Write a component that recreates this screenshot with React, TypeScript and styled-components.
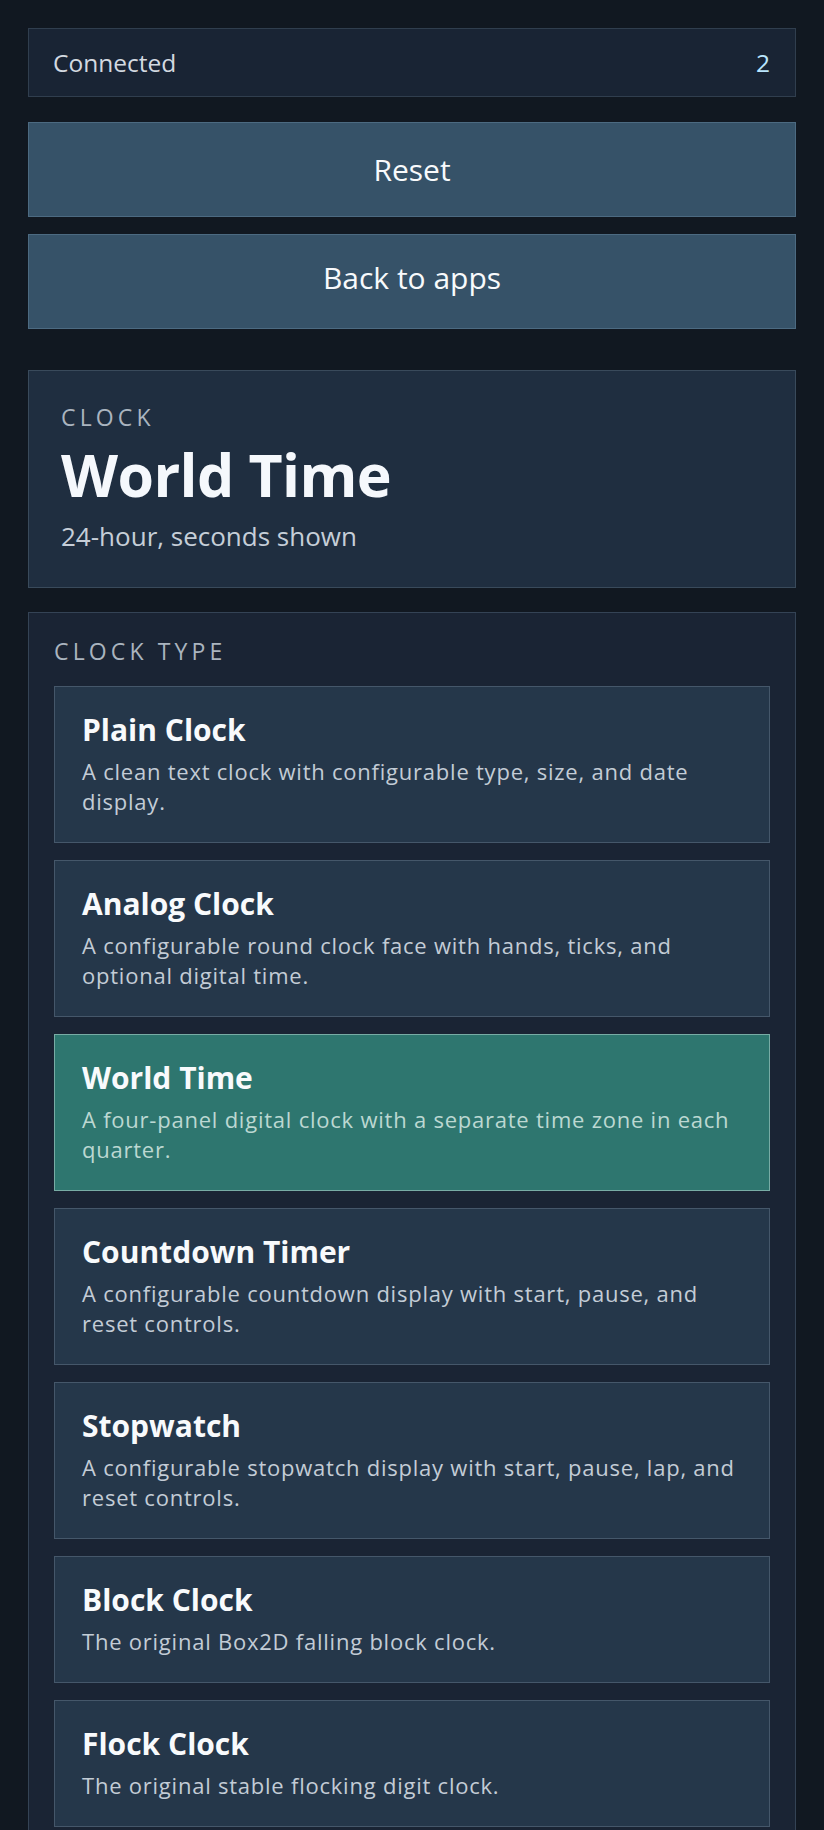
import React from "react";
import styled, { createGlobalStyle } from "styled-components";

const GlobalStyle = createGlobalStyle`
  html, body {
    margin: 0;
    padding: 0;
    background: #111821;
  }

  body {
    font-family: "Open Sans", "Noto Sans", sans-serif;
    color: #f8fafc;
  }

  * {
    box-sizing: border-box;
  }
`;

interface ClockOption {
  id: string;
  title: string;
  description: string;
}

const clockOptions: ClockOption[] = [
  {
    id: "plain",
    title: "Plain Clock",
    description: "A clean text clock with configurable type, size, and date display.",
  },
  {
    id: "analog",
    title: "Analog Clock",
    description: "A configurable round clock face with hands, ticks, and optional digital time.",
  },
  {
    id: "world",
    title: "World Time",
    description: "A four-panel digital clock with a separate time zone in each quarter.",
  },
  {
    id: "countdown",
    title: "Countdown Timer",
    description: "A configurable countdown display with start, pause, and reset controls.",
  },
  {
    id: "stopwatch",
    title: "Stopwatch",
    description: "A configurable stopwatch display with start, pause, lap, and reset controls.",
  },
  {
    id: "block",
    title: "Block Clock",
    description: "The original Box2D falling block clock.",
  },
  {
    id: "flock",
    title: "Flock Clock",
    description: "The original stable flocking digit clock.",
  },
];

const App = () => {
  const selected = "world";

  return (
    <>
      <GlobalStyle />
      <Page>
        <StatusBar>
          <StatusLabel>Connected</StatusLabel>
          <StatusCount>2</StatusCount>
        </StatusBar>

        <ActionStack>
          <ActionButton type="button">Reset</ActionButton>
          <BackLink href="#">Back to apps</BackLink>
        </ActionStack>

        <HeaderCard>
          <Eyebrow>Clock</Eyebrow>
          <Heading>World Time</Heading>
          <Subheading>24-hour, seconds shown</Subheading>
        </HeaderCard>

        <Section>
          <SectionLabel>Clock type</SectionLabel>
          <OptionList>
            {clockOptions.map((option) => (
              <OptionCard key={option.id} type="button" $selected={option.id === selected}>
                <OptionTitle>{option.title}</OptionTitle>
                <OptionDesc $selected={option.id === selected}>{option.description}</OptionDesc>
              </OptionCard>
            ))}
          </OptionList>
        </Section>
      </Page>
    </>
  );
};

const Page = styled.div`
  display: flex;
  flex-direction: column;
  padding: 28px 28px 40px;
`;

const StatusBar = styled.div`
  display: flex;
  align-items: center;
  justify-content: space-between;
  height: 69px;
  padding: 0 25px 0 24px;
  background: #192434;
  border: 1px solid #303e4e;
  font-size: 24.5px;
`;

const StatusLabel = styled.span`
  color: #d3d9e0;
`;

const StatusCount = styled.span`
  color: #bae6fd;
`;

const ActionStack = styled.div`
  display: flex;
  flex-direction: column;
  gap: 17px;
  margin-top: 25px;
`;

const ActionButton = styled.button`
  display: flex;
  align-items: center;
  justify-content: center;
  width: 100%;
  height: 95px;
  padding: 0;
  background: #365268;
  border: 1px solid #4c6a81;
  border-radius: 0;
  color: #f8fafc;
  font-family: inherit;
  font-size: 30px;
  text-decoration: none;
  cursor: pointer;
`;

const BackLink = styled(ActionButton).attrs({ as: "a" })`
  padding-bottom: 9px;
`;

const HeaderCard = styled.section`
  margin-top: 41px;
  padding: 32px 32px 33px;
  background: #1f2e40;
  border: 1px solid #394a5b;
`;

const Eyebrow = styled.div`
  font-size: 23px;
  line-height: 28px;
  letter-spacing: 0.18em;
  text-transform: uppercase;
  color: #aab4bf;
`;

const Heading = styled.h1`
  margin: 10px 0 0;
  font-size: 59px;
  line-height: 66px;
  font-weight: 700;
  letter-spacing: -0.01em;
  color: #f5f8fc;
`;

const Subheading = styled.p`
  margin: 11px 0 0;
  font-size: 26px;
  line-height: 36px;
  color: #c6ced8;
`;

const Section = styled.section`
  margin-top: 24px;
  padding: 24px 25px 25px;
  background: #1a2434;
  border: 1px solid #344355;
`;

const SectionLabel = styled.div`
  font-size: 23px;
  line-height: 28px;
  letter-spacing: 0.18em;
  text-transform: uppercase;
  color: #aab4bf;
`;

const OptionList = styled.div`
  display: flex;
  flex-direction: column;
  gap: 17px;
  margin-top: 21px;
`;

const OptionCard = styled.button<{ $selected: boolean }>`
  display: block;
  width: 100%;
  padding: 27px 27px 26px;
  text-align: left;
  font-family: inherit;
  border-radius: 0;
  cursor: pointer;
  background: ${(p) => (p.$selected ? "#2e766f" : "#25374a")};
  border: 1px solid ${(p) => (p.$selected ? "#78aca5" : "#45576a")};
`;

const OptionTitle = styled.div`
  font-size: 30px;
  line-height: 32px;
  font-weight: 700;
  color: #f8fafc;
`;

const OptionDesc = styled.div<{ $selected: boolean }>`
  margin-top: 10px;
  font-size: 22px;
  line-height: 30px;
  letter-spacing: 0.035em;
  color: ${(p) => (p.$selected ? "#bcd8d2" : "#c3ccd6")};
`;

export default App;
